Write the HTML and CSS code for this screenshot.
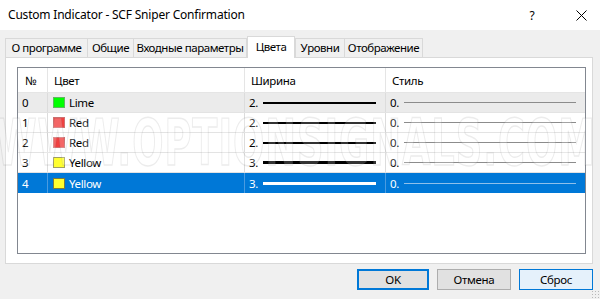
FILE: index.html
```html
<!DOCTYPE html>
<html>
<head>
<meta charset="utf-8">
<link rel="stylesheet" href="styles.css">
</head>
<body>
<div class="win">
  <div class="titlebar">
    <div class="title">Custom Indicator - SCF Sniper Confirmation</div>
    <div class="help">?</div>
    <div class="close">
      <svg width="11" height="11" viewBox="0 0 11 11"><path d="M0.5 0.5 L10.5 10.5 M10.5 0.5 L0.5 10.5" stroke="#000" stroke-width="1" fill="none"/></svg>
    </div>
  </div>
  <div class="body">
    <div class="tabs">
      <div class="tab">О программе</div>
      <div class="tab">Общие</div>
      <div class="tab">Входные параметры</div>
      <div class="tab active">Цвета</div>
      <div class="tab">Уровни</div>
      <div class="tab">Отображение</div>
    </div>
    <div class="panel">
      <div class="list">
        <div class="row head">
          <div class="c c1">№</div>
          <div class="c c2">Цвет</div>
          <div class="c c3">Ширина</div>
          <div class="c c4">Стиль</div>
        </div>
        <div class="row r-gray">
          <div class="c c1">0</div>
          <div class="c c2"><span class="sw lime"></span>Lime</div>
          <div class="c c3"><span class="num">2.</span><span class="ln w2"></span></div>
          <div class="c c4"><span class="num">0.</span><span class="ln s1"></span></div>
        </div>
        <div class="row">
          <div class="c c1">1</div>
          <div class="c c2"><span class="sw red"></span>Red</div>
          <div class="c c3"><span class="num">2.</span><span class="ln w2"></span></div>
          <div class="c c4"><span class="num">0.</span><span class="ln s1"></span></div>
        </div>
        <div class="row">
          <div class="c c1">2</div>
          <div class="c c2"><span class="sw red"></span>Red</div>
          <div class="c c3"><span class="num">2.</span><span class="ln w2"></span></div>
          <div class="c c4"><span class="num">0.</span><span class="ln s1"></span></div>
        </div>
        <div class="row">
          <div class="c c1">3</div>
          <div class="c c2"><span class="sw yellow"></span>Yellow</div>
          <div class="c c3"><span class="num">3.</span><span class="ln w3"></span></div>
          <div class="c c4"><span class="num">0.</span><span class="ln s1"></span></div>
        </div>
        <div class="row sel">
          <div class="c c1">4</div>
          <div class="c c2"><span class="sw yellow"></span>Yellow</div>
          <div class="c c3"><span class="num">3.</span><span class="ln w3"></span></div>
          <div class="c c4"><span class="num">0.</span><span class="ln s1"></span></div>
        </div>
      </div>
    </div>
    <div class="buttons">
      <div class="btn ok">OK</div>
      <div class="btn cancel">Отмена</div>
      <div class="btn reset">Сброс</div>
    </div>
    <div class="grip"></div>
  </div>
  <div class="watermark" aria-hidden="true"></div>
</div>
</body>
</html>
```

FILE: styles.css
```css
* { box-sizing: border-box; }
html, body { margin: 0; padding: 0; }
body {
  width: 600px;
  height: 299px;
  overflow: hidden;
  background: #f0f0f0;
  font-family: "Noto Sans", "Liberation Sans", sans-serif;
  font-size: 12px;
  color: #000;
}
.win { position: relative; width: 600px; height: 299px; }
.titlebar {
  height: 30px;
  background: #fff;
  display: flex;
  align-items: center;
  padding-left: 8px;
}
.title { flex: 1; font-size: 12px; letter-spacing: -0.2px; padding-bottom: 1px; }
.help { width: 12px; text-align: center; font-size: 12px; margin-right: 38px; }
.close { width: 11px; height: 11px; margin-right: 13px; display: flex; }
.body { position: relative; height: 269px; padding: 6px 7px 0 5px; }
.tabs { display: flex; height: 21px; align-items: flex-end; }
.tab {
  height: 19px;
  line-height: 17px;
  padding: 0;
  text-align: center;
  white-space: nowrap;
  overflow: hidden;
  border: 1px solid #d9d9d9;
  border-bottom: none;
  margin-right: -1px;
  background: #f0f0f0;
  font-size: 11.5px;
  letter-spacing: -0.45px;
}
.tab:nth-child(1) { width: 83px; }
.tab:nth-child(2) { width: 47px; }
.tab:nth-child(3) { width: 114px; }
.tab:nth-child(4) { width: 48px; }
.tab:nth-child(5) { width: 50px; }
.tab:nth-child(6) { width: 79px; }
.tab.active {
  height: 22px;
  line-height: 19px;
  background: #fff;
  position: relative;
  z-index: 2;
  margin-bottom: -1px;
  margin-left: 1px;
  margin-right: 0;
}
.panel {
  height: 207px;
  background: #fff;
  border: 1px solid #d9d9d9;
  padding: 9px 6px 0 11px;
}
.list {
  height: 187px;
  border: 1px solid #828790;
  background: #fff;
}
.row {
  display: grid;
  grid-template-columns: 30px 197px 141px 1fr;
  height: 20px;
  border-bottom: 1px solid #e3e3e3;
  background: #fff;
}
.row.head { height: 25px; border-bottom: 1px solid #e5e5e5; }
.row.r-gray { background: #ebebeb; }
.row.sel { background: #0078d7; color: #fff; border-bottom: none; }
.c {
  display: flex;
  align-items: center;
  border-right: 1px solid #dcdcdc;
  padding-left: 4px;
  white-space: nowrap;
  font-size: 11.5px;
  letter-spacing: -0.35px;
}
.row.sel .c { border-right-color: #4a9be0; }
.c4 { border-right: none; }
.head .c { padding-left: 6px; border-right-color: #e5e5e5; }
.head .c1 { padding-left: 7px; }
.c2 { padding-left: 5px; }
.sw {
  width: 12px;
  height: 11px;
  margin-right: 4px;
  border: 1px solid #9a9a9a;
}
.sw.lime { background: #00ff00; border-color: #5fb85f; }
.sw.red { background: #f04040; border-color: #d07070; }
.sw.yellow { background: #ffff30; border-color: #a0a060; }
.sel .sw.yellow { border-color: #7a7a40; }
.num { width: 14px; }
.ln { display: block; }
.c3 .ln { width: 113px; }
.c4 .ln { width: 172px; height: 1px; background: #8c8c8c; }
.ln.w2 { height: 2px; background: #000; }
.ln.w3 { height: 3px; background: #000; }
.sel .ln.w3 { background: #fff; }
.sel .c4 .ln { background: #8fc0ea; }
.buttons {
  display: flex;
  justify-content: flex-end;
  gap: 8px;
  margin-top: 5px;
}
.btn {
  height: 21px;
  display: flex;
  align-items: center;
  justify-content: center;
  background: #e1e1e1;
  border: 1px solid #adadad;
  font-size: 11.5px;
  letter-spacing: -0.3px;
}
.btn.ok { width: 72px; border: 2px solid #0078d7; }
.btn.cancel { width: 74px; }
.btn.reset { width: 74px; background: #e5f1fb; border-color: #0078d7; }
.grip {
  position: absolute;
  right: 1px;
  bottom: 1px;
  width: 8px;
  height: 8px;
  background-image: radial-gradient(circle, #b8b8b8 0.8px, transparent 1px);
  background-size: 3px 3px;
}
.watermark {
  position: absolute;
  left: -4px;
  top: 100px;
  width: 590px;
  height: 60px;
  font-family: "DejaVu Sans Condensed", "DejaVu Sans", sans-serif;
  font-weight: bold;
  font-size: 44px;
  line-height: 60px;
  letter-spacing: 1px;
  color: rgba(255, 255, 255, 0.2);
  -webkit-text-stroke: 1px rgba(110, 110, 110, 0.13);
  transform: scaleY(1.45) scaleX(0.93);
  transform-origin: left top;
  pointer-events: none;
  white-space: nowrap;
}
.watermark::before { content: "WWW.OPTIONSIGNALS.COM"; }
```
